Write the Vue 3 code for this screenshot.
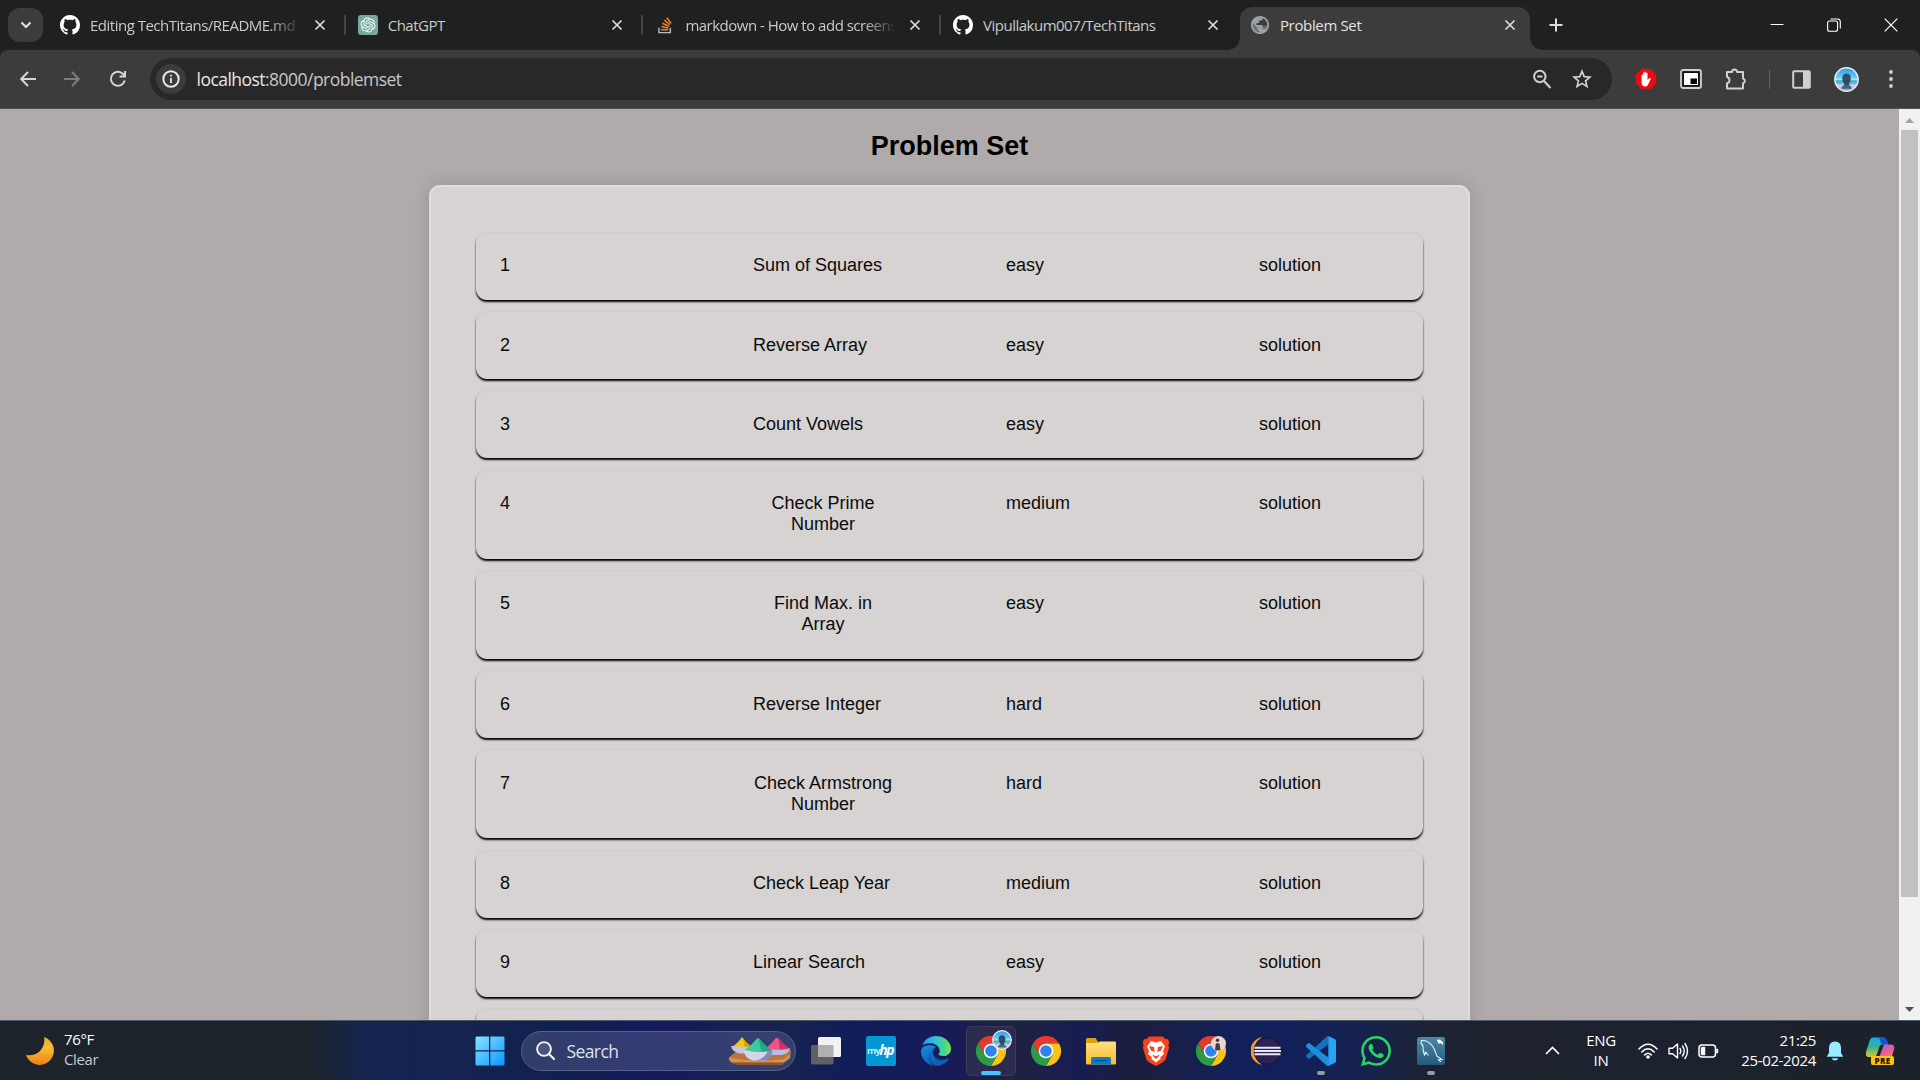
<script setup>
const tabs = [
  { title: 'Editing TechTitans/README.md', icon: 'github', fade: true },
  { title: 'ChatGPT', icon: 'gpt' },
  { title: 'markdown - How to add screenshots', icon: 'stack', fade: true },
  { title: 'Vipullakum007/TechTitans', icon: 'github' },
  { title: 'Problem Set', icon: 'globe', active: true }
]

const problems = [
  { id: 1, title: 'Sum of Squares', level: 'easy' },
  { id: 2, title: 'Reverse Array', level: 'easy' },
  { id: 3, title: 'Count Vowels', level: 'easy' },
  { id: 4, title: 'Check Prime Number', level: 'medium' },
  { id: 5, title: 'Find Max. in Array', level: 'easy' },
  { id: 6, title: 'Reverse Integer', level: 'hard' },
  { id: 7, title: 'Check Armstrong Number', level: 'hard' },
  { id: 8, title: 'Check Leap Year', level: 'medium' },
  { id: 9, title: 'Linear Search', level: 'easy' }
]
</script>

<template>
  <div class="screen">
    <svg class="defs" width="0" height="0" aria-hidden="true">
      <defs>
        <linearGradient id="sky" x1="0" y1="0" x2="0" y2="1">
          <stop offset="0" stop-color="#2a9be6" /><stop offset=".4" stop-color="#6cc9f2" /><stop offset=".5" stop-color="#a9e2f4" />
          <stop offset=".56" stop-color="#38adcb" /><stop offset=".68" stop-color="#7fb9d3" /><stop offset=".76" stop-color="#cfd4e2" /><stop offset="1" stop-color="#7c8ad0" />
        </linearGradient>
        <symbol id="chrome" viewBox="0 0 30 30">
          <path fill="#e33b2e" d="M2 7.5A15 15 0 0 1 28 7.5H15V15L8.5 18.75Z" />
          <path fill="#fbc116" d="M28 7.5A15 15 0 0 1 15 30L21.5 18.75 15 15V7.5Z" />
          <path fill="#2a9c48" d="M15 30A15 15 0 0 1 2 7.5L8.5 18.75 15 15 21.5 18.75Z" />
          <circle cx="15" cy="15" r="7.3" fill="#fff" /><circle cx="15" cy="15" r="5.8" fill="#3080ee" />
        </symbol>
        <symbol id="beach" viewBox="0 0 24 24">
          <circle cx="12" cy="12" r="11.2" fill="url(#sky)" stroke="#e8f2f6" stroke-width="1.4" />
          <path fill="#27435a" opacity=".92" d="M8 10c0-5 8-5 8 0 .4 3-.6 4.600-1.600 6l.4 2.500H9.800l.2-2.500C8.600 14.600 7.700 13 8 10z" />
          <path fill="#45657f" d="M8 18.300q4-2 8 0l1 2.500H7.500z" />
        </symbol>
      </defs>
    </svg>

    <header class="tabstrip">
      <div class="tab-search">
        <svg width="12" height="8" viewBox="0 0 12 8"><path d="M1.5 1.5 6 6l4.5-4.5" fill="none" stroke="#e3e3e3" stroke-width="2" /></svg>
      </div>
      <div class="tabs">
        <div v-for="(t, i) in tabs" :key="i" class="tab" :class="{ active: t.active, divided: i < 3 }">
          <svg v-if="t.icon === 'github'" class="fav" viewBox="0 0 16 16"><path fill="#fff" d="M8 0C3.58 0 0 3.58 0 8c0 3.54 2.29 6.53 5.47 7.59.4.07.55-.17.55-.38 0-.19-.01-.82-.01-1.49-2.01.37-2.53-.49-2.69-.94-.09-.23-.48-.94-.82-1.13-.28-.15-.68-.52-.01-.53.63-.01 1.08.58 1.23.82.72 1.21 1.87.87 2.33.66.07-.52.28-.87.51-1.07-1.78-.2-3.64-.89-3.64-3.95 0-.87.31-1.59.82-2.15-.08-.2-.36-1.02.08-2.12 0 0 .67-.21 2.2.82.64-.18 1.32-.27 2-.27s1.36.09 2 .27c1.53-1.04 2.2-.82 2.2-.82.44 1.1.16 1.92.08 2.12.51.56.82 1.27.82 2.15 0 3.07-1.87 3.75-3.65 3.95.29.25.54.73.54 1.48 0 1.07-.01 1.93-.01 2.2 0 .21.15.46.55.38A8.01 8.01 0 0 0 16 8c0-4.42-3.58-8-8-8z" /></svg>
          <svg v-else-if="t.icon === 'gpt'" class="fav" viewBox="0 0 32 32"><rect width="32" height="32" rx="5" fill="#74aa9c" /><path transform="translate(4 4)" fill="#fff" d="M22.2819 9.8211a5.9847 5.9847 0 0 0-.5157-4.9108 6.0462 6.0462 0 0 0-6.5098-2.9A6.0651 6.0651 0 0 0 4.9807 4.1818a5.9847 5.9847 0 0 0-3.9977 2.9 6.0462 6.0462 0 0 0 .7427 7.0966 5.98 5.98 0 0 0 .511 4.9107 6.051 6.051 0 0 0 6.5146 2.9001A5.9847 5.9847 0 0 0 13.2599 24a6.0557 6.0557 0 0 0 5.7718-4.2058 5.9894 5.9894 0 0 0 3.9977-2.9001 6.0557 6.0557 0 0 0-.7475-7.0729zm-9.022 12.6081a4.4755 4.4755 0 0 1-2.8764-1.0408l.1419-.0804 4.7783-2.7582a.7948.7948 0 0 0 .3927-.6813v-6.7369l2.02 1.1686a.071.071 0 0 1 .038.052v5.5826a4.504 4.504 0 0 1-4.4945 4.4944zm-9.6607-4.1254a4.4708 4.4708 0 0 1-.5346-3.0137l.142.0852 4.783 2.7582a.7712.7712 0 0 0 .7806 0l5.8428-3.3685v2.3324a.0804.0804 0 0 1-.0332.0615L9.74 19.9502a4.4992 4.4992 0 0 1-6.1408-1.6464zM2.3408 7.8956a4.485 4.485 0 0 1 2.3655-1.9728V11.6a.7664.7664 0 0 0 .3879.6765l5.8144 3.3543-2.0201 1.1685a.0757.0757 0 0 1-.071 0l-4.8303-2.7865A4.504 4.504 0 0 1 2.3408 7.872zm16.5963 3.8558L13.1038 8.364 15.1192 7.2a.0757.0757 0 0 1 .071 0l4.8303 2.7913a4.4944 4.4944 0 0 1-.6765 8.1042v-5.6772a.79.79 0 0 0-.407-.667zm2.0107-3.0231l-.142-.0852-4.7735-2.7818a.7759.7759 0 0 0-.7854 0L9.409 9.2297V6.8974a.0662.0662 0 0 1 .0284-.0615l4.8303-2.7866a4.4992 4.4992 0 0 1 6.6802 4.66zM8.3065 12.863l-2.02-1.1638a.0804.0804 0 0 1-.038-.0567V6.0742a4.4992 4.4992 0 0 1 7.3757-3.4537l-.142.0805L8.704 5.459a.7948.7948 0 0 0-.3927.6813zm1.0976-2.3654l2.602-1.4998 2.6069 1.4998v2.9994l-2.5974 1.4997-2.6067-1.4997Z" /></svg>
          <svg v-else-if="t.icon === 'stack'" class="fav" viewBox="-3 -3.5 30 30"><path fill="#f48024" d="M15.725 0l-1.72 1.277 6.39 8.588 1.716-1.277L15.725 0zm-3.94 3.418l-1.369 1.644 8.225 6.85 1.369-1.644-8.225-6.85zm-3.15 4.465l-.905 1.94 9.702 4.517.904-1.94-9.701-4.517zm-1.85 4.86l-.44 2.093 10.473 2.201.44-2.092-10.473-2.203zm-.63 4.86v2.13h10.66v-2.13Z" /><path fill="#bcbbbb" d="M1.89 15.47V24h19.19v-8.53h-2.133v6.397H4.021v-6.396Z" /></svg>
          <svg v-else class="fav" viewBox="1 1 22 22"><path fill="#9aa0a6" d="M12 2C6.480 2 2 6.480 2 12s4.480 10 10 10 10-4.480 10-10S17.520 2 12 2zm-1 17.930c-3.950-.490-7-3.850-7-7.930 0-.620.080-1.210.210-1.790L9 15v1c0 1.100.9 2 2 2v1.930zm6.900-2.540c-.260-.810-1-1.390-1.900-1.390h-1v-3c0-.550-.450-1-1-1H8v-2h2c.550 0 1-.450 1-1V7h2c1.100 0 2-.9 2-2v-.410c2.930 1.190 5 4.060 5 7.410 0 2.080-.8 3.970-2.100 5.390z" /><path fill="#9aa0a6" d="M3 8.500 9 14.500v1.500q.2 2 2 2v3L6 19 3 14zM17 18l-1-2h-1v-3l3 .5 3-2-1 4z" opacity=".55" /></svg>
          <span class="title" :class="{ fade: t.fade }">{{ t.title }}</span>
          <svg class="x" viewBox="0 0 12 12"><path d="m1.500 1.500 9 9m0-9-9 9" stroke="#dcdcdc" stroke-width="1.700" /></svg>
        </div>
      </div>
      <svg class="plus" width="14" height="14" viewBox="0 0 14 14"><path d="M7 .5v13M.5 7h13" stroke="#dcdcdc" stroke-width="2" /></svg>
      <div class="window-controls">
        <svg width="14" height="14" viewBox="0 0 14 14"><path d="M.5 6.500h13" stroke="#fff" /></svg>
        <svg width="14" height="14" viewBox="0 0 14 14" fill="none" stroke="#fff" stroke-width="1.100"><rect x=".6" y="3" width="10" height="10.300" rx="2" /><path d="M3.500 1h7q2.800 0 2.800 2.800v6.700" /></svg>
        <svg width="14" height="14" viewBox="0 0 14 14"><path d="m.7.7 12.600 12.600m0-12.600L.7 13.300" stroke="#fff" stroke-width="1.200" /></svg>
      </div>
    </header>

    <div class="toolbar">
      <div class="nav">
        <svg width="16" height="16" viewBox="0 0 16 16"><path d="M16 8H1.500M8 1 1.200 8 8 15" fill="none" stroke="#d6d6d6" stroke-width="2" /></svg>
        <svg width="16" height="16" viewBox="0 0 16 16"><path d="M0 8h14.500M8 1l6.800 7L8 15" fill="none" stroke="#7d7d7d" stroke-width="2" /></svg>
        <svg width="18" height="18" viewBox="0 0 18 18"><path d="M15.700 10.500A7 7 0 1 1 14 4l1.500 1.800" fill="none" stroke="#d6d6d6" stroke-width="2" /><path d="M17 1v6.500h-6.500v-2H15V1z" fill="#d6d6d6" /></svg>
      </div>
      <div class="omnibox">
        <div class="info">
          <svg width="18" height="18" viewBox="0 0 18 18"><circle cx="9" cy="9" r="7.700" fill="none" stroke="#e8e8e8" stroke-width="2" /><path d="M9 8v5M9 4.800v1.800" stroke="#e8e8e8" stroke-width="1.800" /></svg>
        </div>
        <span class="url"><b>localhost</b>:8000/problemset</span>
        <svg width="20" height="20" viewBox="0 0 20 20" fill="none" stroke="#d0d0d0" stroke-width="2"><circle cx="7.800" cy="7.500" r="5.700" /><path d="m12 12 6.500 7M5.200 7.500h5.200" /></svg>
        <svg class="star" width="20" height="20" viewBox="0 0 20 20"><path d="m10 2.300 2.200 5.300 5.700.5-4.300 3.700 1.300 5.600-4.900-3-4.900 3 1.300-5.600L2.100 8.100l5.700-.5z" fill="none" stroke="#d0d0d0" stroke-width="1.700" /></svg>
      </div>
      <div class="extensions">
        <svg width="22" height="22" viewBox="0 0 22 22"><path d="M6.700.7h8.600l6 6v8.600l-6 6H6.700l-6-6V6.700z" fill="#ec0b13" /><path d="M6.200 11.200V7.100q.8-.9 1.400 0V5q.8-.9 1.500 0V4q.8-.9 1.500 0v1q.8-.9 1.500 0v7q2-2.700 3.500-1.800-1.200 3.100-2.900 6.200-.8 2-2.600 2-3.900 0-3.900-4z" transform="translate(.4 0)" fill="#fff" /></svg>
        <svg width="22" height="20" viewBox="0 0 22 20"><rect x="1" y="1" width="20" height="18" rx="2" fill="none" stroke="#cfcfcf" stroke-width="1.800" /><rect x="2.500" y="2.500" width="17" height="15" fill="#111" /><rect x="4" y="4" width="14" height="12" fill="#fff" /><rect x="10.500" y="9.500" width="6.500" height="5.500" fill="#050505" /></svg>
        <svg width="22" height="22" viewBox="0 0 22 22"><path d="M2 4h5a2.500 2.500 0 0 1 5 0h6v6.500a2.500 2.500 0 0 1 0 4.800V20.500H2v-5.200q2.500-.4 2.500-3T2 9z" fill="none" stroke="#d0d0d0" stroke-width="2" stroke-linejoin="round" /></svg>
        <i class="bar"></i>
        <svg width="19" height="19" viewBox="0 0 19 19"><rect x="1.200" y="1.200" width="16.600" height="16.600" rx="1" fill="none" stroke="#d0d0d0" stroke-width="2" /><path fill="#d0d0d0" d="M11 1h7v17h-7z" /></svg>
        <svg class="me" width="25" height="25"><use href="#beach" /></svg>
        <svg width="4" height="18" viewBox="0 0 4 18" fill="#d0d0d0"><circle cx="2" cy="2" r="1.900" /><circle cx="2" cy="9" r="1.900" /><circle cx="2" cy="16" r="1.900" /></svg>
      </div>
    </div>

    <div class="viewport">
      <main>
        <h2>Problem Set</h2>
        <div class="container">
          <div v-for="p in problems" :key="p.id" class="row">
            <div class="cell">{{ p.id }}</div>
            <div class="cell">{{ p.title }}</div>
            <div class="cell">{{ p.level }}</div>
            <div class="cell">solution</div>
          </div>
          <div class="row next"></div>
        </div>
      </main>
      <div class="scrollbar">
        <svg width="9" height="5" viewBox="0 0 9 5"><path d="M4.500 0 9 5H0z" fill="#a3a3a3" /></svg>
        <div class="thumb"></div>
        <svg width="9" height="5" viewBox="0 0 9 5"><path d="M4.500 5 9 0H0z" fill="#505050" /></svg>
      </div>
    </div>

    <footer class="taskbar">
      <div class="weather">
        <svg width="30" height="30" viewBox="0 0 30 30"><defs><linearGradient id="moon" x1="0" y1="0" x2="0" y2="1"><stop offset="0" stop-color="#e8a94a" /><stop offset=".4" stop-color="#f7bd2e" /><stop offset="1" stop-color="#f07c20" /></linearGradient></defs><path d="M19 1A14.300 14.300 0 1 1 1 19Q9 20.500 15 15 20.500 9 19 1z" fill="url(#moon)" /></svg>
        <div class="lines"><span>76°F</span><span class="dim">Clear</span></div>
      </div>

      <div class="apps">
        <svg class="win" width="30" height="30" viewBox="0 0 30 30"><defs><linearGradient id="wing" x1="0" y1="0" x2="1" y2="1"><stop offset="0" stop-color="#8be3ff" /><stop offset="1" stop-color="#0796ff" /></linearGradient></defs><path d="M1.500.5H14v13.700H.5V1.500zM15.300.5h13.200l1 1v12.700H15.300zM.5 15.500H14v14H1.500l-1-1zM15.300 15.500h14.200v13l-1 1H15.300z" fill="url(#wing)" /></svg>
        <div class="search">
          <svg width="19" height="19" viewBox="0 0 19 19"><circle cx="8" cy="8" r="6.900" fill="#ffffff20" stroke="#f2f2f5" stroke-width="1.900" /><path d="m13 13 5 5" stroke="#f2f2f5" stroke-width="2.300" stroke-linecap="round" /></svg>
          <span>Search</span>
          <svg class="bowls" width="64" height="30" viewBox="0 0 64 30">
            <path d="M1 21.500 8 15.500l53-2.500 2 2-1 7-6 4.500-2 2.500H10l-6-2-3-2.500z" fill="#b8763d" />
            <path d="M1 21.500q22 5 54 2l7-5v3.500l-6 4.500H5q-4-2-4-5z" fill="#d2925a" /><path d="M4 26.500h52l-2 2.500H10z" fill="#8f552b" />
            <path d="M3 10h22q-1 6-7 7.500h-6Q4 16 3 10z" fill="#c3c5e2" /><path d="M4.500 10.500q5-3 9.500-9.500Q18 7 24 11z" fill="#f3c61b" /><path d="M14 1Q18 7 24 11l-8-.5Q17 6 14 1z" fill="#d3a012" />
            <path d="M37 12h25q-1 6-9 7H43z" fill="#babde0" /><path d="M38 12.500Q44 7 47.500 2.500q1.500-1.500 3 0Q55 8 61 12.500q-11 2.500-23 0z" fill="#f2528a" /><path d="M50 2Q55 8 61 12.500q-5 1-9 1z" fill="#cf3163" />
            <path d="M15.500 14h29q-1 8.500-9 10.500H25Q17 23 15.500 14z" fill="#d4d5eb" /><path d="M28 24.500h8q8-2 8.500-10.500h-5q0 7-11.500 10.500z" fill="#8789bf" /><path d="M16.500 14Q24 9 28.500 3q1.500-1.500 3 0Q37 10 43.500 14q-13 4-27 0z" fill="#3acb9f" /><path d="M30.500 2.500Q37 10 43.500 14q-5 2-10 1.700z" fill="#22a77f" />
          </svg>
        </div>
        <svg class="app task-view" width="30" height="30" viewBox="0 0 30 30"><rect x="0" y="9" width="22.500" height="19.500" rx="1.500" fill="#5e6065" /><rect x="7" y="1" width="23" height="20" rx="1.500" fill="#f2f2f2" /><path d="M7 9h15.500v12H7z" fill="#b0b0b0" /></svg>
        <div class="app hp"><span class="my">my</span><span class="hp-mark">hp</span></div>
        <svg class="app" width="30" height="30" viewBox="0 0 24 24"><defs><linearGradient id="edgeTop" x1="0" y1=".5" x2="1" y2=".5"><stop offset="0" stop-color="#2698dc" /><stop offset=".45" stop-color="#2fc1dd" /><stop offset=".75" stop-color="#45d58b" /><stop offset="1" stop-color="#73e84b" /></linearGradient><linearGradient id="edgeBody" x1="0" y1="0" x2=".4" y2="1"><stop offset="0" stop-color="#188fe0" /><stop offset="1" stop-color="#0b61bd" /></linearGradient></defs>
          <path fill="#0f4f9c" d="M21.860 17.860q.14 0 .25.12.1.13.1.25t-.11.33l-.32.46-.43.53-.44.5q-.26.25-.38.37l-.22.23q-.58.53-1.340 1.040-.76.51-1.600.91-.86.4-1.740.64t-1.670.24q-.9 0-1.690-.28-.8-.28-1.480-.78-.68-.5-1.220-1.170-.53-.66-.92-1.440-.38-.77-.58-1.600-.2-.83-.2-1.670 0-1 .32-1.960.33-.97.87-1.800.14.95.55 1.770.41.82 1.020 1.500.6.68 1.380 1.210.78.54 1.640.9.86.36 1.770.56.92.2 1.800.2 1.120 0 2.180-.24 1.060-.23 2.060-.72l.2-.1.2-.05z" />
          <path fill="url(#edgeBody)" d="M6.360 16.590q0 1.100.27 2.150.27 1.060.78 2.030.51.96 1.240 1.770.74.82 1.660 1.400-1.470-.2-2.800-.74-1.330-.55-2.480-1.370-1.150-.83-2.080-1.900-.92-1.070-1.580-2.330T.36 14.940Q0 13.540 0 12.060q0-.81.32-1.490.31-.68.83-1.230.53-.55 1.200-.96.66-.4 1.350-.66.74-.27 1.500-.39.78-.12 1.550-.12.7 0 1.420.1.72.12 1.400.35.68.23 1.320.57.63.35 1.160.83-.35 0-.7.07-.33.07-.65.23v-.02q-.63.28-1.200.74-.57.46-1.050 1.040-.48.58-.87 1.260-.38.67-.65 1.390-.27.71-.42 1.440-.15.72-.15 1.380z" />
          <path fill="url(#edgeBody)" d="M6.360 16.590C6.400 12 8.500 10 12.050 9.280 9 11 8.600 15 11 18q3.500 4 10 0 1.500-.3 1 .8-3.500 5-9.300 5.200-6-.5-6.340-7.410z" opacity=".75" />
          <path fill="url(#edgeTop)" d="M11.960.06q1.700 0 3.330.39 1.630.38 3.070 1.150 1.430.77 2.620 1.930 1.180 1.160 1.980 2.700.49.94.76 1.960.28 1 .28 2.080 0 .89-.23 1.700-.24.8-.69 1.480-.45.68-1.100 1.220-.64.53-1.450.88-.54.24-1.110.36-.58.13-1.160.13-.42 0-.97-.03-.54-.03-1.100-.12-.55-.1-1.050-.28-.5-.19-.84-.5-.12-.09-.23-.24-.1-.16-.1-.33 0-.15.16-.35.16-.2.35-.5.2-.28.36-.68.16-.4.16-.95 0-1.060-.4-1.960-.4-.91-1.060-1.640-.66-.74-1.520-1.280-.86-.55-1.790-.89-.84-.3-1.720-.44-.87-.14-1.760-.14-1.550 0-3.060.45T.94 7.550q.71-1.740 1.810-3.130 1.100-1.380 2.520-2.350Q6.680 1.100 8.370.58q1.700-.52 3.580-.52Z" />
        </svg>
        <div class="app running current">
          <svg width="30" height="30"><use href="#chrome" /></svg>
          <svg class="badge big" width="20" height="20"><use href="#beach" /></svg>
        </div>
        <svg class="app" width="30" height="30"><use href="#chrome" /></svg>
        <svg class="app" width="30" height="30" viewBox="0 0 30 30"><defs><linearGradient id="fold" x1="0" y1="0" x2="0" y2="1"><stop offset="0" stop-color="#ffe07c" /><stop offset="1" stop-color="#f9bd2e" /></linearGradient></defs><path d="M0 3.500Q0 2 1.500 2h8l3 4.500H30V14H0z" fill="#dca10f" /><path d="M0 7h11.500L14 5.500h15q1 0 1 1v21q0 1-1 1H1q-1 0-1-1z" fill="url(#fold)" /><path d="M5 28.500V23q0-2 2-2h16q2 0 2 2v5.500z" fill="#0f7bd0" /><path d="M8.500 24.700h13" stroke="#095193" stroke-width="1.200" /></svg>
        <svg class="app" width="30" height="30" viewBox="0 0 30 30"><path d="M8 .5h14l2.500 2.700 2.300-.2 1.500 3.300-.9 3.200.7 2.300-3.600 12Q23.800 25.500 15 30q-8.800-4.500-9.500-6.200l-3.600-12 .7-2.300-.9-3.200L3.200 3l2.300.2z" fill="#f9421b" /><path d="m15 6.500 5-1.500 4 5.500-2 4.500 1 3-4 3.500 1 1-5 4-5-4 1-1-4-3.500 1-3-2-4.500L10 5z" fill="#fff" /><path d="m8 10 5 1 .8 5-3.800-1.500zM22 10l-5 1-.8 5 3.800-1.500zM11 18.500l4 1.700 4-1.700-2.300 3L15 23l-1.700-1.500z" fill="#f9421b" /></svg>
        <div class="app">
          <svg width="30" height="30"><use href="#chrome" /></svg>
          <svg class="badge small" width="15" height="15" viewBox="0 0 15 15"><circle cx="7.500" cy="7.500" r="7.500" fill="#ead5d0" /><circle cx="6.500" cy="4.300" r="1.700" fill="#4b3030" /><path d="M4 13.500 4.800 8q1.700-2 3.800 0l.9 6q-3 1.200-5.500-.5z" fill="#453b45" /></svg>
        </div>
        <svg class="app" width="30" height="30" viewBox="0 0 30 30"><path d="M11 1.200A14 14 0 0 0 11 28.800 16 16 0 0 1 11 1.200z" fill="#f69a2c" /><circle cx="16.300" cy="15" r="13.300" fill="#2c2255" stroke="#14131f" stroke-width=".8" /><path d="M3.500 11.800h26M3.200 15h27M3.500 18.200h26" stroke="#e9e6f5" stroke-width="1.900" /></svg>
        <div class="app running">
          <svg width="30" height="30" viewBox="0 0 24 24"><path fill="#1073bb" fill-rule="evenodd" d="M23.150 2.587L18.210.21a1.494 1.494 0 0 0-1.705.29l-9.460 8.630-4.120-3.128a.999.999 0 0 0-1.276.057L.327 7.261A1 1 0 0 0 .326 8.740L3.899 12 .326 15.260a1 1 0 0 0 .001 1.479L1.650 17.940a.999.999 0 0 0 1.276.057l4.120-3.128 9.460 8.630a1.492 1.492 0 0 0 1.704.29l4.942-2.377A1.500 1.500 0 0 0 24 20.060V3.939a1.500 1.500 0 0 0-.85-1.352zm-5.146 14.861L10.826 12l7.178-5.448v10.896z" /><path fill="#1b8fd8" d="M.327 7.261 1.650 6.060q.6-.5 1.276-.057l15.100 11.450V23.800q-.8.200-1.520-.3L.326 8.740q-.5-.8 0-1.479z" /><path fill="#2aa3f0" d="M18 .15 23.150 2.587q.85.450.85 1.352V20.060q0 .9-.85 1.350L18 23.850z" /></svg>
        </div>
        <svg class="app" width="30" height="30" viewBox="0 0 24 24"><path fill="#2bd366" d="M17.472 14.382c-.297-.149-1.758-.867-2.030-.967-.273-.099-.471-.148-.67.15-.197.297-.767.966-.94 1.164-.173.199-.347.223-.644.075-.297-.15-1.255-.463-2.390-1.475-.883-.788-1.480-1.761-1.653-2.059-.173-.297-.018-.458.13-.606.134-.133.298-.347.446-.52.149-.174.198-.298.298-.497.099-.198.05-.371-.025-.52-.075-.149-.669-1.612-.916-2.207-.242-.579-.487-.5-.669-.51-.173-.008-.371-.01-.57-.01-.198 0-.52.074-.792.372-.272.297-1.040 1.016-1.040 2.479 0 1.462 1.065 2.875 1.213 3.074.149.198 2.096 3.200 5.077 4.487.709.306 1.262.489 1.694.625.712.227 1.360.195 1.871.118.571-.085 1.758-.719 2.006-1.413.248-.694.248-1.289.173-1.413-.074-.124-.272-.198-.57-.347m-5.421 7.403h-.004a9.870 9.870 0 01-5.031-1.378l-.361-.214-3.741.982.998-3.648-.235-.374a9.860 9.860 0 01-1.510-5.260c.001-5.450 4.436-9.884 9.888-9.884 2.640 0 5.122 1.030 6.988 2.898a9.825 9.825 0 012.893 6.994c-.003 5.450-4.437 9.884-9.885 9.884m8.413-18.297A11.815 11.815 0 0012.050 0C5.495 0 .16 5.335.157 11.892c0 2.096.547 4.142 1.588 5.945L.057 24l6.305-1.654a11.882 11.882 0 005.683 1.448h.005c6.554 0 11.890-5.335 11.893-11.893a11.821 11.821 0 00-3.480-8.413z" /></svg>
        <div class="app running">
          <svg width="30" height="30" viewBox="0 0 30 30"><defs><linearGradient id="sql" x1="0" y1="0" x2="0" y2="1"><stop offset="0" stop-color="#4d8aa6" /><stop offset="1" stop-color="#24597c" /></linearGradient></defs><rect x="1" y="1" width="28" height="28" rx="2.500" fill="url(#sql)" /><path d="M5 4.500q7-.5 11.500 5.500c3 4.200 3 7.500 4.500 10l5 3.500-3.500.3 2.500 2.200M5 4.500q-.5 3 2 5.500-.5 4.500 1.500 9l1.200-3 2.800 3.500" fill="none" stroke="#e6f0f5" stroke-width="1.100" /><path d="m20.500 3.500 2.500.5.500-1 3.500 3.500v2.500L24.500 7l-1.800.7z" fill="#fff" /></svg>
        </div>
      </div>

      <div class="tray">
        <svg class="up" width="15" height="9" viewBox="0 0 15 9"><path d="M1 8 7.500 1.500 14 8" fill="none" stroke="#fff" stroke-width="1.700" /></svg>
        <div class="lines lang"><span>ENG</span><span>IN</span></div>
        <svg class="wifi" width="20" height="16" viewBox="0 0 20 16" fill="none" stroke="#fff" stroke-width="1.600"><path d="M1 6Q10-3.500 19 6M3.800 9Q10 2.500 16.200 9M6.600 12Q10 8.500 13.400 12" stroke-linecap="round" /><circle cx="10" cy="14" r="1" fill="#fff" /></svg>
        <svg class="vol" width="21" height="18" viewBox="0 0 21 18" fill="none" stroke="#fff" stroke-width="1.400" stroke-linecap="round"><path d="M1 6.200h3.500L9.500 2v14l-5-4.200H1z" stroke-linejoin="round" /><path d="M12 6.500q1.700 2.500 0 5M14.500 4q3.500 5 0 10M17 1.500q5 7.500 0 15" /></svg>
        <svg class="batt" width="21" height="14" viewBox="0 0 21 14"><rect x="1" y="1" width="16.500" height="12" rx="3" fill="none" stroke="#fff" stroke-width="1.500" /><path d="M3 4q0-1 1-1h3v8H4q-1 0-1-1zM18.500 5H20v4h-1.500z" fill="#fff" stroke="#fff" stroke-width=".4" /></svg>
        <div class="lines clock"><span>21:25</span><span>25-02-2024</span></div>
        <svg class="bell" width="18" height="20" viewBox="0 0 18 20"><path d="M9 .6q6 .2 6 6.400v5l2.300 3.800H.7L3 12V7Q3 .8 9 .6zM5.800 17.200h6.400Q11.500 19.500 9 19.500t-3.200-2.300z" fill="#99ecff" /></svg>
        <div class="copilot">
          <svg width="30" height="30" viewBox="0 0 30 30"><defs><linearGradient id="cpa" x1="0" y1="0" x2="0" y2="1"><stop offset="0" stop-color="#1aa6e8" /><stop offset=".5" stop-color="#37b58c" /><stop offset="1" stop-color="#e5c52a" /></linearGradient><linearGradient id="cpb" x1="0" y1="0" x2=".4" y2="1"><stop offset="0" stop-color="#9b6bf0" /><stop offset=".6" stop-color="#e8589c" /><stop offset="1" stop-color="#f4795b" /></linearGradient></defs><path d="M8 1.500h10q3 0 4 3.500l1 3.500h-4l-4 .5-3 9q-1 3-3 3H4q-4 0-3-5L4.500 5q1-3.500 3.500-3.500z" fill="url(#cpa)" /><path d="M14 1.500h4q3 0 4 3.500l1 3.500h-5l-1 1z" fill="#1a4fd0" /><path d="M19 8.500h7q4 0 3 5l-2.500 8H14z" fill="url(#cpb)" /></svg>
          <span>PRE</span>
        </div>
      </div>
    </footer>
  </div>
</template>

<style>
body { overflow: hidden; }
</style>

<style scoped>
.screen { width: 1920px; height: 1080px; display: flex; flex-direction: column; overflow: hidden; font-family: "Open Sans", "Noto Sans", sans-serif; }
svg { display: block; flex: none; }
.defs { position: absolute; }

.tabstrip { height: 50px; flex: none; display: flex; align-items: center; background: #1f2120; }
.tab-search { width: 35px; height: 34px; margin-left: 8px; border-radius: 12px; background: #3c3c3c; display: flex; align-items: center; justify-content: center; }
.tabs { display: flex; height: 50px; margin-left: 4px; }
.tab { width: 297.700px; height: 50px; box-sizing: border-box; display: flex; align-items: center; padding: 0 19px 0 13px; position: relative; color: #c9cac9; }
.tab.divided::after { content: ""; position: absolute; right: -1px; top: 15px; width: 2px; height: 20px; background: #444746; border-radius: 1px; }
.fav { width: 20px; height: 20px; }
.title { flex: 1; min-width: 0; margin: 0 16px 0 10px; font-size: 15px; line-height: 20px; letter-spacing: -0.500px; white-space: nowrap; overflow: hidden; }
.title.fade { -webkit-mask-image: linear-gradient(90deg, #000 86%, transparent 102%); mask-image: linear-gradient(90deg, #000 86%, transparent 102%); }
.x { width: 12px; height: 12px; }
.tab.active { width: 290px; height: 43px; margin: 7px 0 0 2.200px; padding: 0 14px 7px 10px; border-radius: 12px 12px 0 0; background: #3c3c3c; color: #e3e3e3; }
.tab.active .title { letter-spacing: -0.350px; }
.tab.active::before, .tab.active::after { content: ""; position: absolute; bottom: 0; width: 12px; height: 12px; }
.tab.active::before { left: -12px; background: radial-gradient(circle at 0 0, transparent 11.500px, #3c3c3c 12px); }
.tab.active::after { right: -12px; background: radial-gradient(circle at 100% 0, transparent 11.500px, #3c3c3c 12px); }
.plus { margin-left: 19px; }
.window-controls { margin-left: auto; margin-right: 22px; display: flex; gap: 43px; }

.toolbar { height: 59px; flex: none; box-sizing: border-box; display: flex; align-items: center; background: #3c3c3c; border-bottom: 1px solid #565454; border-radius: 8px 8px 0 0; box-shadow: 0 -8px 0 8px #1f2120; clip-path: inset(0); }
.nav { width: 150px; box-sizing: border-box; padding-left: 19.500px; display: flex; align-items: center; gap: 28.500px; }
.omnibox { width: 1462px; height: 42px; border-radius: 21px; background: #282828; display: flex; align-items: center; box-sizing: border-box; padding: 0 20px 0 6px; }
.info { width: 30px; height: 30px; border-radius: 50%; background: #3c3c3c; display: flex; align-items: center; justify-content: center; }
.url { flex: 1; margin-left: 10.500px; font-size: 17.500px; line-height: 24px; color: #c7c7c7; letter-spacing: -0.530px; }
.url b { font-weight: 400; color: #e9e9e9; }
.star { margin-left: 20px; }
.extensions { display: flex; align-items: center; margin-left: 22.500px; gap: 23.200px; }
.bar { width: 1.500px; height: 19px; background: #646464; margin: 0 -1.500px 0 -1.500px; }
.me { margin: 0 7px 0 0; }

.viewport { flex: 1; min-height: 0; display: flex; }
main { flex: 1; background: #b0abaa; overflow: hidden; font-family: "Liberation Sans", Arial, sans-serif; display: flex; flex-direction: column; align-items: center; }
h2 { margin: 22px 0 23px; font-size: 27px; line-height: 31px; font-weight: 700; color: #000; }
.container { width: 1041px; box-sizing: border-box; border: 2px solid #dededc; border-radius: 11px; background: #d6d3d2; padding: 45px; box-shadow: 0 0 18px rgba(0, 0, 0, .14); flex: none; }
.row { box-sizing: border-box; display: grid; grid-template-columns: repeat(4, 253px); justify-content: start; padding: 22.400px 0 22.600px 23px; border: 1px solid transparent; border-top-color: #cecfcd; border-radius: 11px; background: #d6d3d2; box-shadow: 0 2px 2px #000; margin-bottom: 11.250px; }
.row.next { height: 68px; }
.cell { justify-self: start; max-width: 140px; text-align: center; font-size: 18px; line-height: 21px; color: #0b0b0b; }
.scrollbar { width: 21px; background: #f1f1f1; display: flex; flex-direction: column; align-items: center; padding: 9px 0 8px; box-sizing: border-box; }
.thumb { width: 17px; height: 767px; margin: 7px 0 auto; background: #c1c1c1; }

.taskbar { height: 60px; flex: none; box-sizing: border-box; border-top: 1px solid #4c5868; display: flex; align-items: center; color: #fff; background: linear-gradient(90deg, #1d232b 0, #1d232b 310px, #132450 370px, #14234f 460px, #102050 560px, #171a5c 660px, #17234e 780px, #111d59 850px, #171b58 950px, #20213f 1010px, #171d52 1080px, #1d1e3c 1135px, #12205a 1230px, #12205a 1290px, #152250 1360px, #1d2233 1430px, #1d222e 1500px, #1c222c 100%); }
.weather { width: 474.500px; box-sizing: border-box; padding-left: 25px; display: flex; align-items: center; }
.lines { display: flex; flex-direction: column; font-size: 15px; line-height: 20px; letter-spacing: -0.350px; margin-top: -2px; }
.weather .lines { margin-left: 9px; margin-top: -3px; }
.dim { color: #c8c9cb; }
.apps { display: flex; align-items: center; }
.search { width: 275px; height: 40px; margin-left: 16px; box-sizing: border-box; border: 1px solid #55608a; border-radius: 20px; background: linear-gradient(90deg, #313d69, #353b75 50%, #34416b); display: flex; align-items: center; padding: 0 3px 0 14px; }
.search span { flex: 1; margin-left: 12px; font-size: 17.500px; line-height: 24px; color: #dfe1ea; letter-spacing: -0.600px; }
.app { width: 30px; height: 30px; margin-left: 25px; position: relative; flex: none; }
.task-view { margin-left: 15px; }
.hp { background: #0596d4; border-radius: 2px; display: flex; align-items: center; justify-content: center; line-height: 30px; }
.my { font: 600 9.500px/30px "Open Sans", sans-serif; letter-spacing: -0.500px; }
.hp-mark { font: italic 700 14px/26px "Open Sans", sans-serif; letter-spacing: -1.500px; margin: -2px 1px 0 -1px; }
.current { z-index: 0; }
.current::before { content: ""; position: absolute; z-index: -1; left: -10px; top: -10px; width: 48px; height: 48px; border: 1px solid #3b3b5c; border-radius: 5px; background: #2b2b50; }
.running::after { content: ""; position: absolute; left: 11px; top: 35px; width: 8px; height: 4px; border-radius: 2px; background: #989aa8; }
.current::after { left: 5px; width: 20px; background: #4cc2ff; }
.badge { position: absolute; }
.badge.big { left: 16px; top: -6px; }
.badge.small { left: 15px; top: 0; }
.tray { display: flex; align-items: center; margin-left: auto; padding-right: 25px; }
.lang { align-items: center; width: 34px; margin-left: 24px; }
.wifi { margin-left: 20px; }
.vol { margin-left: 10px; }
.batt { margin-left: 9px; }
.clock { align-items: flex-end; width: 90px; margin-left: 7px; }
.bell { margin-left: 10px; }
.copilot { width: 30px; height: 30px; margin-left: 21px; position: relative; }
.copilot span { position: absolute; left: 6px; top: 20px; width: 23px; height: 9px; border-radius: 2px; background: #ffc20e; color: #1b1b1b; font-size: 8px; line-height: 9px; font-weight: 800; text-align: center; letter-spacing: .4px; }
</style>
